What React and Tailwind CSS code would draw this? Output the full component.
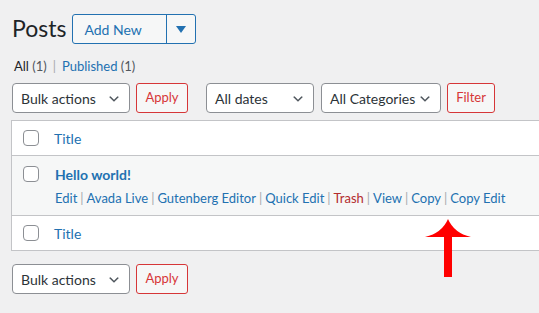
import React from "react";

const font = { fontFamily: 'Lato, "Noto Sans", Arial, sans-serif' };

function Chevron() {
  return (
    <svg width="14" height="14" viewBox="0 0 20 20" className="absolute right-[8px] top-[8px]">
      <path d="M5 6l5 5 5-5 2 1-7 7-7-7z" fill="#50575e" />
    </svg>
  );
}

function Select({ label, w }) {
  return (
    <div
      className={`relative h-[30px] ${w} bg-white border border-[#8c8f94] rounded-[4px] text-[14px] text-[#2c3338] pl-[8px] flex items-center shrink-0`}
    >
      <span>{label}</span>
      <Chevron />
    </div>
  );
}

function RedButton({ label, w }) {
  return (
    <div
      className={`h-[30px] ${w} bg-[#f6f7f7] border border-[#d63638] rounded-[3px] text-[13px] text-[#d63638] flex items-center justify-center shrink-0`}
    >
      {label}
    </div>
  );
}

function Checkbox() {
  return <div className="w-[16px] h-[16px] bg-white border border-[#8c8f94] rounded-[4px] shrink-0" />;
}

function Sep() {
  return <span className="text-[#a7aaad] px-[3px]">|</span>;
}

export default function App() {
  const actions = ["Edit", "Avada Live", "Gutenberg Editor", "Quick Edit", "Trash", "View", "Copy", "Copy Edit"];
  return (
    <div className="relative w-[539px] h-[313px] bg-[#f0f0f1] overflow-hidden" style={font}>
      <div className="pl-[12px] pt-[14px]">
        <div className="flex items-center h-[30px]">
          <h1 className="text-[23px] leading-[30px] text-[#1d2327] font-normal mr-[6px] -mt-[2px]">Posts</h1>
          <div className="flex h-[30px] border border-[#2271b1] rounded-[3px] bg-[#f6f7f7] text-[#2271b1] text-[14px]">
            <div className="w-[93px] flex items-center pl-[11px]">Add New</div>
            <div className="w-[29px] border-l border-[#2271b1] flex items-center justify-center">
              <svg width="10" height="7" viewBox="0 0 10 7">
                <path d="M0 0h10L5 7z" fill="#2271b1" />
              </svg>
            </div>
          </div>
        </div>
        <div className="mt-[14px] text-[13px] leading-[16px] pl-[2px]">
          <span className="text-[#1d2327]">All</span> <span className="text-[#50575e]">(1)</span>
          <span className="text-[#a7aaad] px-[6px]">|</span>
          <span className="text-[#2271b1]">Published</span> <span className="text-[#50575e]">(1)</span>
        </div>
        <div className="mt-[9px] flex items-center">
          <Select label="Bulk actions" w="w-[118px]" />
          <div className="w-[6px]" />
          <RedButton label="Apply" w="w-[52px]" />
          <div className="w-[18px]" />
          <Select label="All dates" w="w-[108px]" />
          <div className="w-[7px]" />
          <Select label="All Categories" w="w-[120px]" />
          <div className="w-[6px]" />
          <RedButton label="Filter" w="w-[48px]" />
        </div>
      </div>
      <div className="ml-[11px] mt-[7px] w-[560px] border border-[#c3c4c7] bg-white">
        <div className="h-[35px] flex items-center border-b border-[#c3c4c7]">
          <div className="ml-[11px] mr-[15px]"><Checkbox /></div>
          <span className="text-[14px] text-[#2271b1]">Title</span>
        </div>
        <div className="h-[60px] bg-[#f6f7f7] flex items-start border-b border-[#c3c4c7]">
          <div className="ml-[11px] mr-[16px] mt-[10px]"><Checkbox /></div>
          <div className="flex flex-col">
            <span className="text-[14px] font-bold text-[#2271b1] mt-[9px] leading-[20px]">Hello world!</span>
            <div className="text-[13px] leading-[18px] mt-[4px] flex">
              {actions.map((a, i) => (
                <span key={a} className="flex">
                  {i > 0 && <Sep />}
                  <span className={a === "Trash" ? "text-[#b32d2e]" : "text-[#2271b1]"}>{a}</span>
                </span>
              ))}
            </div>
          </div>
        </div>
        <div className="h-[34px] flex items-center">
          <div className="ml-[11px] mr-[15px]"><Checkbox /></div>
          <span className="text-[14px] text-[#2271b1]">Title</span>
        </div>
      </div>
      <div className="pl-[12px] mt-[13px] flex items-center">
        <Select label="Bulk actions" w="w-[118px]" />
        <div className="w-[6px]" />
        <RedButton label="Apply" w="w-[52px]" />
      </div>
      <svg className="absolute left-[420px] top-[215px]" width="56" height="66" viewBox="0 0 56 66">
        <path d="M28 4 Q34 18 51 22 L32 22 L32 62 L24 62 L24 22 L5 22 Q22 18 28 4z" fill="#ff0000" />
      </svg>
    </div>
  );
}
